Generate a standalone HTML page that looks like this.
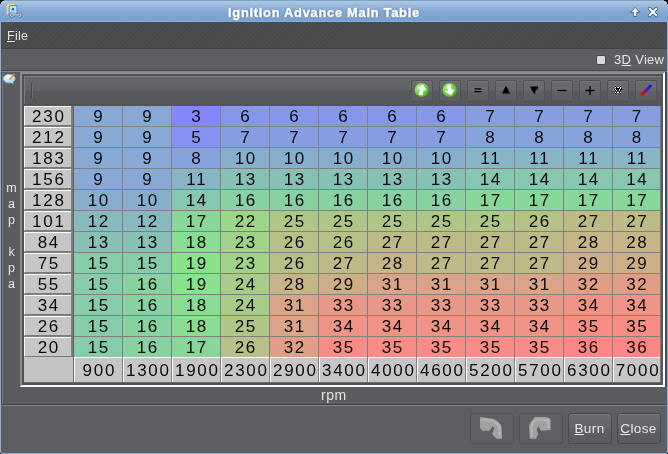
<!DOCTYPE html>
<html><head><meta charset="utf-8"><style>
*{margin:0;padding:0;box-sizing:border-box}
html,body{width:668px;height:454px;overflow:hidden;background:#000;font-family:"Liberation Sans",sans-serif}
.a{position:absolute}
#win{position:absolute;left:0;top:0;width:668px;height:454px;background:#8db0d9;overflow:hidden}
#title{position:absolute;left:0;top:0;width:668px;height:22px;background:linear-gradient(#7f9fc5 0px,#7f9fc5 1px,#acc7e5 1px,#9bb9dd 5px,#84a8d3 12px,#7aa0ce 20px,#82abdb 21px,#82abdb 22px)}
#ttext{position:absolute;left:228px;top:5px;font-weight:bold;font-size:12.8px;letter-spacing:0.76px;-webkit-text-stroke:0.45px #fff;color:#fff;text-shadow:0 0 1px #2e4f7a,0 0 1.5px #2e4f7a;white-space:nowrap;will-change:transform}
#body{position:absolute;left:1px;top:22px;width:666px;height:431px;background:#5c5e61}
#menu{position:absolute;left:1px;top:22px;width:666px;height:26px;background:repeating-linear-gradient(-45deg,#4c4d4f 0px,#4c4d4f 2.4px,#48494b 2.4px,#48494b 3.4px)}
.txt{position:absolute;font-size:12.5px;color:#e4e4e4;white-space:nowrap;will-change:transform;letter-spacing:0.3px}
u{text-decoration:underline;text-underline-offset:1.5px;text-decoration-thickness:1px}
.hl{position:absolute;height:1px}
.vl{position:absolute;width:1px}
.dc{position:absolute;width:48px;height:20px;text-align:center;font-size:17px;line-height:21px;color:#0a0a0a;letter-spacing:1.7px;text-indent:1.7px;will-change:transform}
.lc{position:absolute;background:#c6c6c6;border-top:1px solid #fff;border-left:1px solid #fff;border-bottom:1px solid #7a7a7a;text-align:center;font-size:17px;line-height:19px;color:#0a0a0a;letter-spacing:1.7px;text-indent:1.7px;will-change:transform}
.xl{line-height:25px}
.tb{position:absolute;top:80px;width:22px;height:22px;border:1px solid #505255;border-radius:2px;background:linear-gradient(#6b6d70 0,#67696c 9px,#5f6164 10px,#5b5d60 19px);box-shadow:inset 0 1px 0 #74767a}
.tb svg{position:absolute;left:0;top:0}
.bb{position:absolute;top:413px;width:44px;height:31px;border:1px solid #47494c;border-radius:3px;background:linear-gradient(#6a6c6f 0,#646669 14px,#5d5f62 15px,#595b5e 29px);box-shadow:inset 0 1px 0 #76787b;color:#e8e8e8;font-size:13.5px;text-align:center;line-height:30px;letter-spacing:0.4px;text-indent:-1px;will-change:transform}
.bb.dis{background:#5e6063;border-color:#505255;box-shadow:none}
</style></head><body>
<div id="win">
  <div id="title">
    <svg class="a" style="left:4px;top:1px" width="20" height="20" viewBox="0 0 20 20">
      <defs><linearGradient id="bp" x1="0" y1="0" x2="0" y2="1"><stop offset="0" stop-color="#dcedff"/><stop offset="1" stop-color="#8cc0f4"/></linearGradient></defs>
      <rect x="3.1" y="3.1" width="8" height="10" rx="0.8" fill="#eef2f6" stroke="#eec862" stroke-width="1.1"/>
      <rect x="5" y="4.7" width="8" height="10.2" rx="1.2" fill="url(#bp)" stroke="#4e94e4" stroke-width="1.2"/>
      <circle cx="9" cy="8.3" r="1.2" fill="#2062c6"/>
      <path d="M8.6 13.9H15" stroke="#707070" stroke-width="2.6"/>
      <path d="M8.6 13.9H15" stroke="#d6d6d6" stroke-width="1.2"/>
      <path d="M8.4 12A1.9 1.9 0 1 0 8.4 15.8M15.2 12A1.9 1.9 0 1 1 15.2 15.8" stroke="#707070" stroke-width="2.2" fill="none"/>
      <path d="M8.4 12A1.9 1.9 0 1 0 8.4 15.8M15.2 12A1.9 1.9 0 1 1 15.2 15.8" stroke="#d6d6d6" stroke-width="1" fill="none"/>
    </svg>
    <div id="ttext">Ignition Advance Main Table</div>
    <svg class="a" style="left:629px;top:6px" width="12" height="12" viewBox="0 0 12 12">
      <path d="M6.2 1.4L1.6 6.3H4.6V10.5H7.8V6.3H10.8Z" fill="#fff" stroke="#3a5d88" stroke-width="0.9" stroke-linejoin="round"/>
    </svg>
    <svg class="a" style="left:646px;top:5px" width="14" height="14" viewBox="0 0 14 14">
      <path d="M3.6 3.6L10.4 10.4M10.4 3.6L3.6 10.4" stroke="#3d5f8a" stroke-width="3.5" stroke-linecap="round"/>
      <path d="M3.6 3.6L10.4 10.4M10.4 3.6L3.6 10.4" stroke="#fff" stroke-width="2" stroke-linecap="round"/>
    </svg>
  </div>
  <div id="body"></div>
  <div id="menu"></div>
  <div class="txt" style="left:7px;top:29px"><u style="text-underline-offset:0.5px">F</u>ile</div>
  <div class="hl" style="left:1px;top:48px;width:666px;background:#414244"></div>
  <!-- 3D view row y 49..69 -->
  <div class="a" style="left:596px;top:55px;width:10px;height:10px;background:#d8d8d8;border:1px solid #45474a;border-radius:2px"></div>
  <div class="txt" style="left:614px;top:52px;font-size:13px;letter-spacing:0.3px">3<u style="text-underline-offset:0.5px">D</u> View</div>
  <div class="hl" style="left:1px;top:70px;width:666px;background:#444648"></div>
  <div class="hl" style="left:1px;top:71px;width:666px;background:#818386"></div>
  <!-- left panel -->
  <div class="a" style="left:1px;top:72px;width:666px;height:332px;background:#5a5c5f"></div>
  <div class="vl" style="left:1px;top:72px;height:332px;background:#454749"></div>
  <div class="vl" style="left:2px;top:72px;height:332px;background:#7c7e80"></div>
  <svg class="a" style="left:2px;top:71px" width="16" height="15" viewBox="0 0 16 15">
    <defs><radialGradient id="bub" cx="0.45" cy="0.35" r="0.7"><stop offset="0" stop-color="#ffffff"/><stop offset="1" stop-color="#9fd4e8"/></radialGradient></defs>
    <ellipse cx="7.2" cy="7.6" rx="6" ry="4.4" fill="url(#bub)" stroke="#86bfd4" stroke-width="0.6"/>
    <path d="M9 11.3L11.6 13.2L10.8 10.6Z" fill="#b8e0ee"/>
    <path d="M7.6 8.8L11.4 4.2" stroke="#e8a43a" stroke-width="2"/>
    <path d="M11.4 4.2L12.6 2.6" stroke="#e86a6a" stroke-width="2"/>
  </svg>
  <div class="txt" style="left:1px;top:180px;width:21px;text-align:center;font-size:12.5px;line-height:16px;letter-spacing:0">m<br>a<br>p<br>&nbsp;<br>k<br>p<br>a</div>
  <!-- table frame outer -->
  <div class="a" style="left:20px;top:72px;width:645px;height:315px;border-top:2px solid #8a8c8e;border-left:2px solid #8a8c8e;border-right:2px solid #ffffff;border-bottom:2px solid #ffffff;background:#878787"></div>
  <div class="a" style="left:665px;top:72px;width:2px;height:315px;background:#46484a"></div>
  <div class="a" style="left:22px;top:74px;width:641px;height:311px;border-top:2px solid #4f5153;border-left:2px solid #4f5153;border-right:2px solid #55575a;border-bottom:2px solid #4f5153;background:#878787"></div>
  <!-- toolbar -->
  <div class="a" style="left:24px;top:76px;width:637px;height:28px;border-top:1px solid #7a7c7f;border-left:1px solid #7a7c7f;background:linear-gradient(#646669 0px,#616366 13px,#58595c 14px,#55575a 27px)"></div>
  <div class="hl" style="left:24px;top:104px;width:637px;height:2px;background:#525456"></div>
  <div class="vl" style="left:31px;top:83px;height:15px;background:#45474a"></div>
  <div class="vl" style="left:32px;top:83px;height:15px;background:#6c6e71"></div>
  <div class="tb" style="left:411px"><svg width="21" height="20" viewBox="0 0 21 20"><defs><radialGradient id="gg" cx="0.35" cy="0.35" r="0.75"><stop offset="0" stop-color="#b8f090"/><stop offset="0.55" stop-color="#6fd848"/><stop offset="1" stop-color="#3aa81c"/></radialGradient></defs><circle cx="9.7" cy="9" r="7.1" fill="url(#gg)"/><path d="M10 3.6L4.8 8.6H8V14.2H11.6V8.6H14.8Z" fill="#fff" transform="rotate(12 10 9)"/></svg></div>
<div class="tb" style="left:439px"><svg width="21" height="20" viewBox="0 0 21 20"><circle cx="9.7" cy="9" r="7.1" fill="url(#gg)"/><path d="M10 14.6L4.8 9.4H8V3.8H11.6V9.4H14.8Z" fill="#fff" transform="rotate(-12 10 9)"/></svg></div>
<div class="tb" style="left:467px"><svg width="21" height="20" viewBox="0 0 21 20"><path d="M6.5 7.9h7M6.5 10.6h7" stroke="#000" stroke-width="1.2"/></svg></div>
<div class="tb" style="left:495px"><svg width="21" height="20" viewBox="0 0 21 20"><path d="M10 4.6L14 12.6H6Z" fill="#000"/></svg></div>
<div class="tb" style="left:523px"><svg width="21" height="20" viewBox="0 0 21 20"><path d="M6.5 5.6H14V7.2L11.2 10.4V13H10.3L7.3 8.2V7.2H6.5Z" fill="#000"/></svg></div>
<div class="tb" style="left:551px"><svg width="21" height="20" viewBox="0 0 21 20"><path d="M5.5 9.5h9" stroke="#000" stroke-width="1.3"/></svg></div>
<div class="tb" style="left:579px"><svg width="21" height="20" viewBox="0 0 21 20"><path d="M5.5 9.5h9M10 5v9" stroke="#000" stroke-width="1.3"/></svg></div>
<div class="tb" style="left:607px"><svg width="21" height="20" viewBox="0 0 21 20"><g shape-rendering="crispEdges"><rect x="7" y="5" width="1" height="1" fill="#000"/><rect x="12" y="5" width="1" height="1" fill="#000"/><rect x="7" y="6" width="1" height="1" fill="#e8e8e8"/><rect x="8" y="6" width="1" height="1" fill="#000"/><rect x="9" y="6" width="1" height="1" fill="#e8e8e8"/><rect x="10" y="6" width="1" height="1" fill="#e8e8e8"/><rect x="11" y="6" width="1" height="1" fill="#000"/><rect x="12" y="6" width="1" height="1" fill="#e8e8e8"/><rect x="8" y="7" width="1" height="1" fill="#000"/><rect x="9" y="7" width="1" height="1" fill="#000"/><rect x="10" y="7" width="1" height="1" fill="#000"/><rect x="11" y="7" width="1" height="1" fill="#000"/><rect x="12" y="7" width="1" height="1" fill="#e8e8e8"/><rect x="13" y="7" width="1" height="1" fill="#000"/><rect x="6" y="8" width="1" height="1" fill="#000"/><rect x="7" y="8" width="1" height="1" fill="#e8e8e8"/><rect x="8" y="8" width="1" height="1" fill="#000"/><rect x="9" y="8" width="1" height="1" fill="#000"/><rect x="10" y="8" width="1" height="1" fill="#000"/><rect x="11" y="8" width="1" height="1" fill="#e8e8e8"/><rect x="12" y="8" width="1" height="1" fill="#000"/><rect x="13" y="8" width="1" height="1" fill="#000"/><rect x="7" y="9" width="1" height="1" fill="#000"/><rect x="8" y="9" width="1" height="1" fill="#e8e8e8"/><rect x="9" y="9" width="1" height="1" fill="#000"/><rect x="10" y="9" width="1" height="1" fill="#000"/><rect x="11" y="9" width="1" height="1" fill="#e8e8e8"/><rect x="12" y="9" width="1" height="1" fill="#000"/><rect x="8" y="10" width="1" height="1" fill="#000"/><rect x="11" y="10" width="1" height="1" fill="#000"/><rect x="7" y="11" width="1" height="1" fill="#e8e8e8"/><rect x="8" y="11" width="1" height="1" fill="#000"/><rect x="9" y="11" width="1" height="1" fill="#e8e8e8"/><rect x="10" y="11" width="1" height="1" fill="#e8e8e8"/><rect x="11" y="11" width="1" height="1" fill="#000"/><rect x="12" y="11" width="1" height="1" fill="#e8e8e8"/><rect x="7" y="12" width="1" height="1" fill="#000"/><rect x="12" y="12" width="1" height="1" fill="#000"/></g></svg></div>
<div class="tb" style="left:635px"><svg width="21" height="20" viewBox="0 0 21 20"><defs><linearGradient id="pg" x1="0" y1="1" x2="1" y2="0"><stop offset="0" stop-color="#ff0000"/><stop offset="0.5" stop-color="#8000a0"/><stop offset="1" stop-color="#0020ff"/></linearGradient></defs><path d="M6 13.5L14.5 5" stroke="url(#pg)" stroke-width="2.8" stroke-linecap="round"/></svg></div>
  <!-- grid bg -->
  <div class="a" style="left:24px;top:106px;width:637px;height:277px;background:#808080"></div>
  <div class="vl" style="left:72px;top:106px;height:251px;background:#7a7a7a"></div>
  <div class="vl" style="left:73px;top:106px;height:276px;background:#5f5f5f"></div>
  <div class="vl" style="left:660px;top:106px;height:276px;background:#7a7c7e"></div>
  <div class="hl" style="left:24px;top:382px;width:637px;background:#6a6a6a"></div>
  <div class="dc" style="left:74px;top:106px;width:48px;background:#87a9d4">9</div>
<div class="dc" style="left:123px;top:106px;width:48px;background:#87a9d4">9</div>
<div class="dc" style="left:172px;top:106px;width:48px;background:#8686ff">3</div>
<div class="dc" style="left:221px;top:106px;width:48px;background:#8697e9">6</div>
<div class="dc" style="left:270px;top:106px;width:48px;background:#8697e9">6</div>
<div class="dc" style="left:319px;top:106px;width:48px;background:#8697e9">6</div>
<div class="dc" style="left:368px;top:106px;width:48px;background:#8697e9">6</div>
<div class="dc" style="left:417px;top:106px;width:48px;background:#8697e9">6</div>
<div class="dc" style="left:466px;top:106px;width:48px;background:#869de2">7</div>
<div class="dc" style="left:515px;top:106px;width:48px;background:#869de2">7</div>
<div class="dc" style="left:564px;top:106px;width:48px;background:#869de2">7</div>
<div class="dc" style="left:613px;top:106px;width:47px;background:#869de2">7</div>
<div class="dc" style="left:74px;top:127px;width:48px;background:#87a9d4">9</div>
<div class="dc" style="left:123px;top:127px;width:48px;background:#87a9d4">9</div>
<div class="dc" style="left:172px;top:127px;width:48px;background:#8692f1">5</div>
<div class="dc" style="left:221px;top:127px;width:48px;background:#869de2">7</div>
<div class="dc" style="left:270px;top:127px;width:48px;background:#869de2">7</div>
<div class="dc" style="left:319px;top:127px;width:48px;background:#869de2">7</div>
<div class="dc" style="left:368px;top:127px;width:48px;background:#869de2">7</div>
<div class="dc" style="left:417px;top:127px;width:48px;background:#869de2">7</div>
<div class="dc" style="left:466px;top:127px;width:48px;background:#87a3db">8</div>
<div class="dc" style="left:515px;top:127px;width:48px;background:#87a3db">8</div>
<div class="dc" style="left:564px;top:127px;width:48px;background:#87a3db">8</div>
<div class="dc" style="left:613px;top:127px;width:47px;background:#87a3db">8</div>
<div class="dc" style="left:74px;top:148px;width:48px;background:#87a9d4">9</div>
<div class="dc" style="left:123px;top:148px;width:48px;background:#87a9d4">9</div>
<div class="dc" style="left:172px;top:148px;width:48px;background:#87a3db">8</div>
<div class="dc" style="left:221px;top:148px;width:48px;background:#87afcd">10</div>
<div class="dc" style="left:270px;top:148px;width:48px;background:#87afcd">10</div>
<div class="dc" style="left:319px;top:148px;width:48px;background:#87afcd">10</div>
<div class="dc" style="left:368px;top:148px;width:48px;background:#87afcd">10</div>
<div class="dc" style="left:417px;top:148px;width:48px;background:#87afcd">10</div>
<div class="dc" style="left:466px;top:148px;width:48px;background:#87b5c5">11</div>
<div class="dc" style="left:515px;top:148px;width:48px;background:#87b5c5">11</div>
<div class="dc" style="left:564px;top:148px;width:48px;background:#87b5c5">11</div>
<div class="dc" style="left:613px;top:148px;width:47px;background:#87b5c5">11</div>
<div class="dc" style="left:74px;top:169px;width:48px;background:#87a9d4">9</div>
<div class="dc" style="left:123px;top:169px;width:48px;background:#87a9d4">9</div>
<div class="dc" style="left:172px;top:169px;width:48px;background:#87b5c5">11</div>
<div class="dc" style="left:221px;top:169px;width:48px;background:#87c0b7">13</div>
<div class="dc" style="left:270px;top:169px;width:48px;background:#87c0b7">13</div>
<div class="dc" style="left:319px;top:169px;width:48px;background:#87c0b7">13</div>
<div class="dc" style="left:368px;top:169px;width:48px;background:#87c0b7">13</div>
<div class="dc" style="left:417px;top:169px;width:48px;background:#87c0b7">13</div>
<div class="dc" style="left:466px;top:169px;width:48px;background:#87c6b0">14</div>
<div class="dc" style="left:515px;top:169px;width:48px;background:#87c6b0">14</div>
<div class="dc" style="left:564px;top:169px;width:48px;background:#87c6b0">14</div>
<div class="dc" style="left:613px;top:169px;width:47px;background:#87c6b0">14</div>
<div class="dc" style="left:74px;top:190px;width:48px;background:#87afcd">10</div>
<div class="dc" style="left:123px;top:190px;width:48px;background:#87afcd">10</div>
<div class="dc" style="left:172px;top:190px;width:48px;background:#87c6b0">14</div>
<div class="dc" style="left:221px;top:190px;width:48px;background:#88d2a1">16</div>
<div class="dc" style="left:270px;top:190px;width:48px;background:#88d2a1">16</div>
<div class="dc" style="left:319px;top:190px;width:48px;background:#88d2a1">16</div>
<div class="dc" style="left:368px;top:190px;width:48px;background:#88d2a1">16</div>
<div class="dc" style="left:417px;top:190px;width:48px;background:#88d2a1">16</div>
<div class="dc" style="left:466px;top:190px;width:48px;background:#88d79a">17</div>
<div class="dc" style="left:515px;top:190px;width:48px;background:#88d79a">17</div>
<div class="dc" style="left:564px;top:190px;width:48px;background:#88d79a">17</div>
<div class="dc" style="left:613px;top:190px;width:47px;background:#88d79a">17</div>
<div class="dc" style="left:74px;top:211px;width:48px;background:#87babe">12</div>
<div class="dc" style="left:123px;top:211px;width:48px;background:#87babe">12</div>
<div class="dc" style="left:172px;top:211px;width:48px;background:#88d79a">17</div>
<div class="dc" style="left:221px;top:211px;width:48px;background:#9ad788">22</div>
<div class="dc" style="left:270px;top:211px;width:48px;background:#b0c687">25</div>
<div class="dc" style="left:319px;top:211px;width:48px;background:#b0c687">25</div>
<div class="dc" style="left:368px;top:211px;width:48px;background:#b0c687">25</div>
<div class="dc" style="left:417px;top:211px;width:48px;background:#b0c687">25</div>
<div class="dc" style="left:466px;top:211px;width:48px;background:#b0c687">25</div>
<div class="dc" style="left:515px;top:211px;width:48px;background:#b7c087">26</div>
<div class="dc" style="left:564px;top:211px;width:48px;background:#beba87">27</div>
<div class="dc" style="left:613px;top:211px;width:47px;background:#beba87">27</div>
<div class="dc" style="left:74px;top:232px;width:48px;background:#87c0b7">13</div>
<div class="dc" style="left:123px;top:232px;width:48px;background:#87c0b7">13</div>
<div class="dc" style="left:172px;top:232px;width:48px;background:#88dd93">18</div>
<div class="dc" style="left:221px;top:232px;width:48px;background:#a1d288">23</div>
<div class="dc" style="left:270px;top:232px;width:48px;background:#b7c087">26</div>
<div class="dc" style="left:319px;top:232px;width:48px;background:#b7c087">26</div>
<div class="dc" style="left:368px;top:232px;width:48px;background:#beba87">27</div>
<div class="dc" style="left:417px;top:232px;width:48px;background:#beba87">27</div>
<div class="dc" style="left:466px;top:232px;width:48px;background:#beba87">27</div>
<div class="dc" style="left:515px;top:232px;width:48px;background:#beba87">27</div>
<div class="dc" style="left:564px;top:232px;width:48px;background:#c5b587">28</div>
<div class="dc" style="left:613px;top:232px;width:47px;background:#c5b587">28</div>
<div class="dc" style="left:74px;top:253px;width:48px;background:#87cca8">15</div>
<div class="dc" style="left:123px;top:253px;width:48px;background:#87cca8">15</div>
<div class="dc" style="left:172px;top:253px;width:48px;background:#88e38c">19</div>
<div class="dc" style="left:221px;top:253px;width:48px;background:#a1d288">23</div>
<div class="dc" style="left:270px;top:253px;width:48px;background:#b7c087">26</div>
<div class="dc" style="left:319px;top:253px;width:48px;background:#beba87">27</div>
<div class="dc" style="left:368px;top:253px;width:48px;background:#c5b587">28</div>
<div class="dc" style="left:417px;top:253px;width:48px;background:#beba87">27</div>
<div class="dc" style="left:466px;top:253px;width:48px;background:#beba87">27</div>
<div class="dc" style="left:515px;top:253px;width:48px;background:#beba87">27</div>
<div class="dc" style="left:564px;top:253px;width:48px;background:#cdaf87">29</div>
<div class="dc" style="left:613px;top:253px;width:47px;background:#cdaf87">29</div>
<div class="dc" style="left:74px;top:274px;width:48px;background:#87cca8">15</div>
<div class="dc" style="left:123px;top:274px;width:48px;background:#88d2a1">16</div>
<div class="dc" style="left:172px;top:274px;width:48px;background:#88e38c">19</div>
<div class="dc" style="left:221px;top:274px;width:48px;background:#a8cc87">24</div>
<div class="dc" style="left:270px;top:274px;width:48px;background:#c5b587">28</div>
<div class="dc" style="left:319px;top:274px;width:48px;background:#cdaf87">29</div>
<div class="dc" style="left:368px;top:274px;width:48px;background:#dba387">31</div>
<div class="dc" style="left:417px;top:274px;width:48px;background:#dba387">31</div>
<div class="dc" style="left:466px;top:274px;width:48px;background:#dba387">31</div>
<div class="dc" style="left:515px;top:274px;width:48px;background:#dba387">31</div>
<div class="dc" style="left:564px;top:274px;width:48px;background:#e29d86">32</div>
<div class="dc" style="left:613px;top:274px;width:47px;background:#e29d86">32</div>
<div class="dc" style="left:74px;top:295px;width:48px;background:#87cca8">15</div>
<div class="dc" style="left:123px;top:295px;width:48px;background:#88d2a1">16</div>
<div class="dc" style="left:172px;top:295px;width:48px;background:#88dd93">18</div>
<div class="dc" style="left:221px;top:295px;width:48px;background:#a8cc87">24</div>
<div class="dc" style="left:270px;top:295px;width:48px;background:#dba387">31</div>
<div class="dc" style="left:319px;top:295px;width:48px;background:#e99786">33</div>
<div class="dc" style="left:368px;top:295px;width:48px;background:#e99786">33</div>
<div class="dc" style="left:417px;top:295px;width:48px;background:#e99786">33</div>
<div class="dc" style="left:466px;top:295px;width:48px;background:#e99786">33</div>
<div class="dc" style="left:515px;top:295px;width:48px;background:#e99786">33</div>
<div class="dc" style="left:564px;top:295px;width:48px;background:#f19286">34</div>
<div class="dc" style="left:613px;top:295px;width:47px;background:#f19286">34</div>
<div class="dc" style="left:74px;top:316px;width:48px;background:#87cca8">15</div>
<div class="dc" style="left:123px;top:316px;width:48px;background:#88d2a1">16</div>
<div class="dc" style="left:172px;top:316px;width:48px;background:#88dd93">18</div>
<div class="dc" style="left:221px;top:316px;width:48px;background:#b0c687">25</div>
<div class="dc" style="left:270px;top:316px;width:48px;background:#dba387">31</div>
<div class="dc" style="left:319px;top:316px;width:48px;background:#f19286">34</div>
<div class="dc" style="left:368px;top:316px;width:48px;background:#f19286">34</div>
<div class="dc" style="left:417px;top:316px;width:48px;background:#f19286">34</div>
<div class="dc" style="left:466px;top:316px;width:48px;background:#f19286">34</div>
<div class="dc" style="left:515px;top:316px;width:48px;background:#f19286">34</div>
<div class="dc" style="left:564px;top:316px;width:48px;background:#f88c86">35</div>
<div class="dc" style="left:613px;top:316px;width:47px;background:#f88c86">35</div>
<div class="dc" style="left:74px;top:337px;width:48px;background:#87cca8">15</div>
<div class="dc" style="left:123px;top:337px;width:48px;background:#88d2a1">16</div>
<div class="dc" style="left:172px;top:337px;width:48px;background:#88d79a">17</div>
<div class="dc" style="left:221px;top:337px;width:48px;background:#b7c087">26</div>
<div class="dc" style="left:270px;top:337px;width:48px;background:#e29d86">32</div>
<div class="dc" style="left:319px;top:337px;width:48px;background:#f88c86">35</div>
<div class="dc" style="left:368px;top:337px;width:48px;background:#f88c86">35</div>
<div class="dc" style="left:417px;top:337px;width:48px;background:#f88c86">35</div>
<div class="dc" style="left:466px;top:337px;width:48px;background:#f88c86">35</div>
<div class="dc" style="left:515px;top:337px;width:48px;background:#f88c86">35</div>
<div class="dc" style="left:564px;top:337px;width:48px;background:#ff8686">36</div>
<div class="dc" style="left:613px;top:337px;width:47px;background:#ff8686">36</div>
<div class="lc" style="left:24px;top:106px;width:47px;height:20px">230</div>
<div class="lc" style="left:24px;top:127px;width:47px;height:20px">212</div>
<div class="lc" style="left:24px;top:148px;width:47px;height:20px">183</div>
<div class="lc" style="left:24px;top:169px;width:47px;height:20px">156</div>
<div class="lc" style="left:24px;top:190px;width:47px;height:20px">128</div>
<div class="lc" style="left:24px;top:211px;width:47px;height:20px">101</div>
<div class="lc" style="left:24px;top:232px;width:47px;height:20px">84</div>
<div class="lc" style="left:24px;top:253px;width:47px;height:20px">75</div>
<div class="lc" style="left:24px;top:274px;width:47px;height:20px">55</div>
<div class="lc" style="left:24px;top:295px;width:47px;height:20px">34</div>
<div class="lc" style="left:24px;top:316px;width:47px;height:20px">26</div>
<div class="lc" style="left:24px;top:337px;width:47px;height:20px">20</div>
<div class="lc xl" style="left:74px;top:357px;width:48px;height:25px;border-bottom:none">900</div>
<div class="lc xl" style="left:123px;top:357px;width:48px;height:25px;border-bottom:none">1300</div>
<div class="lc xl" style="left:172px;top:357px;width:48px;height:25px;border-bottom:none">1900</div>
<div class="lc xl" style="left:221px;top:357px;width:48px;height:25px;border-bottom:none">2300</div>
<div class="lc xl" style="left:270px;top:357px;width:48px;height:25px;border-bottom:none">2900</div>
<div class="lc xl" style="left:319px;top:357px;width:48px;height:25px;border-bottom:none">3400</div>
<div class="lc xl" style="left:368px;top:357px;width:48px;height:25px;border-bottom:none">4000</div>
<div class="lc xl" style="left:417px;top:357px;width:48px;height:25px;border-bottom:none">4600</div>
<div class="lc xl" style="left:466px;top:357px;width:48px;height:25px;border-bottom:none">5200</div>
<div class="lc xl" style="left:515px;top:357px;width:48px;height:25px;border-bottom:none">5700</div>
<div class="lc xl" style="left:564px;top:357px;width:48px;height:25px;border-bottom:none">6300</div>
<div class="lc xl" style="left:613px;top:357px;width:47px;height:25px;border-bottom:none">7000</div>
<div class="a" style="left:24px;top:357px;width:49px;height:25px;background:#c4c4c4"></div>
<div class="vl" style="left:73px;top:357px;height:25px;background:#6a6a6a"></div>
  <!-- rpm -->
  <div class="txt" style="left:321px;top:387px;font-size:14px;letter-spacing:0.5px">rpm</div>
  <div class="hl" style="left:1px;top:404px;width:666px;background:#3f4143"></div>
  <div class="hl" style="left:1px;top:405px;width:666px;background:#858789"></div>
  <!-- bottom buttons -->
  <div class="bb dis" style="left:470px"></div>
  <div class="bb dis" style="left:519px"></div>
  <div class="bb" style="left:568px"><u style="text-underline-offset:0.5px">B</u>urn</div>
  <div class="bb" style="left:617px"><u style="text-underline-offset:0.5px">C</u>lose</div>
  <svg class="a" style="left:476px;top:414px" width="30" height="28" viewBox="0 0 30 28">
<path d="M4 3L18 5Q24 8 25.6 13L26 24.7L20.4 24.7L16 19.8L18.5 14.2L16.7 12.3L13.6 16.7L6.2 16.7L4 13.6Z" fill="#a2a2a2"/>
<path d="M6 5.5L17 7Q22 9.5 23.5 13.5L23.8 22.5" stroke="#b4b4b4" stroke-width="2.2" fill="none"/></svg>
<svg class="a" style="left:525px;top:414px" width="30" height="28" viewBox="0 0 30 28">
<path d="M9.9 3.1L21.6 3.1L25.6 4.9L25.6 16L16 16.7L13.6 12.3L11.4 15.4L13.3 19.8L11.1 24.7L4.9 24.7L4 11.7L6.2 7.4Z" fill="#a2a2a2"/>
<path d="M7 23L6.5 12.5L8.5 8Q11 5.5 14 5.5L23.5 5.8L23.5 14" stroke="#b4b4b4" stroke-width="2.2" fill="none"/></svg>
  <div class="a" style="left:0;top:453px;width:1px;height:1px;background:#000"></div>
  <div class="a" style="left:667px;top:453px;width:1px;height:1px;background:#000"></div>
  <div class="a" style="left:0;top:0;width:4px;height:1px;background:#000"></div>
  <div class="a" style="left:0;top:1px;width:2px;height:1px;background:#000"></div>
  <div class="a" style="left:0;top:2px;width:1px;height:2px;background:#000"></div>
  <div class="a" style="left:664px;top:0;width:4px;height:1px;background:#000"></div>
  <div class="a" style="left:666px;top:1px;width:2px;height:1px;background:#000"></div>
  <div class="a" style="left:667px;top:2px;width:1px;height:2px;background:#000"></div>
  <div class="a" style="left:4px;top:1px;width:1px;height:1px;background:#b4cce8"></div>
  <div class="a" style="left:2px;top:2px;width:1px;height:1px;background:#b4cce8"></div>
  <div class="a" style="left:1px;top:3px;width:1px;height:1px;background:#b4cce8"></div>
</div>
</body></html>
